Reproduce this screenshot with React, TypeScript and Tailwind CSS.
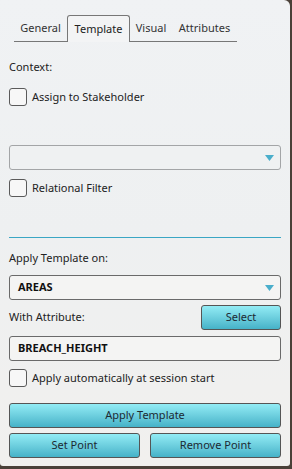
const tabs = [
  { label: 'General', w: 'w-[53px]' },
  { label: 'Template', w: 'w-[63px]' },
  { label: 'Visual', w: 'w-[42px]' },
  { label: 'Attributes', w: 'w-[65px]' },
];

function Checkbox({ label }: { label: string }) {
  return (
    <label className="flex items-center gap-[5px]">
      <span className="h-[18px] w-[18px] rounded-[3px] border-[1.5px] border-[#5a5a5a] bg-[#f7f7f7]" />
      <span className="text-[11px] text-[#222]">{label}</span>
    </label>
  );
}

function Arrow() {
  return (
    <svg width="9" height="6" viewBox="0 0 9 6" className="mr-[6px]">
      <path d="M0 0 L9 0 L4.5 6 Z" fill="#4aaecb" />
    </svg>
  );
}

function Button({ label, className = '' }: { label: string; className?: string }) {
  return (
    <button
      className={`flex h-[25px] items-center justify-center rounded-[3px] border border-[#555] bg-gradient-to-b from-[#92ecf5] to-[#45b2c8] text-[11px] text-[#1c2a33] ${className}`}
    >
      {label}
    </button>
  );
}

export default function App() {
  return (
    <div className="h-[469px] w-[292px] bg-[#4a4038]" style={{ fontFamily: '"Noto Sans", "Open Sans", sans-serif' }}>
      <div className="flex h-[466px] w-[290px] flex-col rounded-tr-[6px] rounded-b-[3px] bg-gradient-to-b from-[#f0f2f4] via-[#eef0f1] to-[#f1f0ee] px-[9px]">
        <div className="mt-[15px] ml-[5px] flex w-[223px] items-end border-b border-[#777]">
          {tabs.map((t) =>
            t.label === 'Template' ? (
              <div
                key={t.label}
                className={`-mb-px flex h-[27px] items-center justify-center rounded-t-[3px] border border-b-0 border-[#777] bg-[#f3f4f5] text-[11px] text-[#222] ${t.w}`}
              >
                {t.label}
              </div>
            ) : (
              <div key={t.label} className={`flex h-[26px] items-center justify-center text-[11px] text-[#333] ${t.w}`}>
                {t.label}
              </div>
            )
          )}
        </div>

        <div className="mt-[17px] text-[11px] leading-[16px] text-[#222]">Context:</div>
        <div className="mt-[13px]">
          <Checkbox label="Assign to Stakeholder" />
        </div>

        <div className="mt-[39px] flex h-[25px] items-center justify-end rounded-[3px] border border-[#a3a5a7] bg-[#eff1f2]">
          <Arrow />
        </div>
        <div className="mt-[9px]">
          <Checkbox label="Relational Filter" />
        </div>

        <div className="mt-[40px] h-px bg-[#3aa6c4]" />

        <div className="mt-[12px] text-[11px] leading-[16px] text-[#222]">Apply Template on:</div>
        <div className="mt-[9px] flex h-[25px] items-center justify-between rounded-[3px] border border-[#6a6a6a] bg-[#f4f4f3] pl-[8px]">
          <span className="text-[11px] font-bold text-[#111]">AREAS</span>
          <Arrow />
        </div>
        <div className="mt-[5px] flex items-center justify-between">
          <span className="text-[11px] text-[#222]">With Attribute:</span>
          <Button label="Select" className="w-[80px]" />
        </div>
        <div className="mt-[6px] flex h-[25px] items-center rounded-[3px] border border-[#6a6a6a] bg-[#f4f4f3] pl-[8px]">
          <span className="text-[11px] font-bold text-[#111]">BREACH_HEIGHT</span>
        </div>
        <div className="mt-[8px]">
          <Checkbox label="Apply automatically at session start" />
        </div>

        <Button label="Apply Template" className="mt-[16px] w-full" />
        <div className="mt-[5px] flex justify-between">
          <Button label="Set Point" className="w-[131px]" />
          <Button label="Remove Point" className="w-[131px]" />
        </div>
      </div>
    </div>
  );
}
